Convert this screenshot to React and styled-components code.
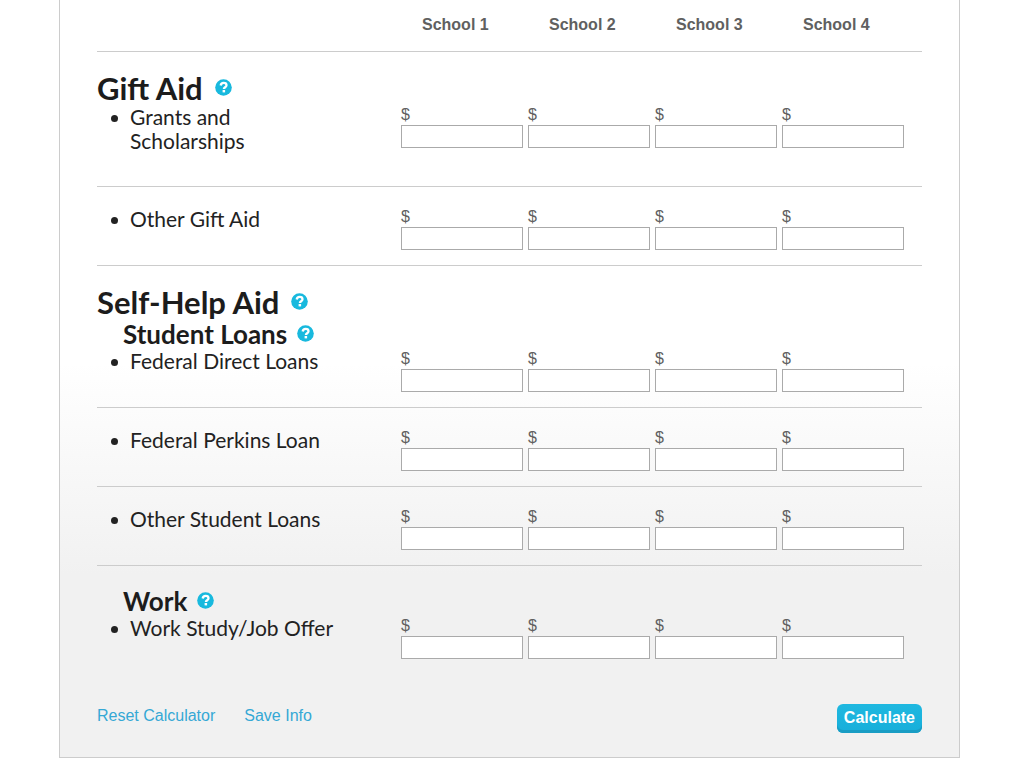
import React from "react";
import styled, { createGlobalStyle } from "styled-components";

const GlobalStyle = createGlobalStyle`
  * {
    box-sizing: border-box;
  }

  body {
    margin: 0;
    background: #fff;
    color: #606060;
    font-family: "Liberation Sans", Arial, sans-serif;
    font-size: 16px;
  }
`;

const schools = ["School 1", "School 2", "School 3", "School 4"];

const sections = [
  {
    id: "gift",
    title: "Gift Aid",
    items: ["Grants and Scholarships", "Other Gift Aid"]
  },
  {
    id: "loans",
    title: "Self-Help Aid",
    subtitle: "Student Loans",
    items: [
      "Federal Direct Loans",
      "Federal Perkins Loan",
      "Other Student Loans"
    ]
  },
  {
    id: "work",
    subtitle: "Work",
    items: ["Work Study/Job Offer"]
  }
];

const HelpButton = ({ topic }) => (
  <Help type="button" aria-label={`Help: ${topic}`}>
    <svg width="17" height="17" viewBox="0 0 17 17" aria-hidden="true">
      <circle cx="8.5" cy="8.5" r="8.3" fill="#18b9de" />
      <path
        d="M5.7 6.5C5.9 4.7 7.1 3.9 8.6 3.9c1.7 0 2.9.9 2.9 2.3 0 2-2.6 2-2.6 3.8"
        fill="none"
        stroke="#fff"
        strokeWidth="2.3"
      />
      <rect x="7.6" y="11" width="2.5" height="2.4" fill="#fff" />
    </svg>
  </Help>
);

const SectionHeading = ({ title, subtitle }) => (
  <tr>
    <HeadingCell colSpan={schools.length + 1}>
      {title && (
        <Title>
          {title}
          <HelpButton topic={title} />
        </Title>
      )}
      {subtitle && (
        <Subtitle>
          {subtitle}
          <HelpButton topic={subtitle} />
        </Subtitle>
      )}
    </HeadingCell>
  </tr>
);

const ItemRow = ({ label, first, last }) => (
  <Row $first={first} $last={last}>
    <ItemCell scope="row">
      <List>
        <Item>{label}</Item>
      </List>
    </ItemCell>
    {schools.map(school => (
      <td key={school}>
        <Field>
          $
          <Amount type="text" aria-label={`${label}, ${school}, in dollars`} />
        </Field>
      </td>
    ))}
  </Row>
);

const App = () => {
  const submitHandler = e => {
    e.preventDefault();
  };

  return (
    <>
      <GlobalStyle />
      <Page>
        <Card onSubmit={submitHandler}>
          <Table>
            <colgroup>
              <LabelCol />
              <SchoolCol />
              <SchoolCol />
              <SchoolCol />
              <SchoolCol $last />
            </colgroup>
            <thead>
              <tr>
                <SchoolHeader as="td" />
                {schools.map(school => (
                  <SchoolHeader key={school} scope="col">
                    {school}
                  </SchoolHeader>
                ))}
              </tr>
            </thead>
            {sections.map((section, s) => (
              <tbody key={section.id}>
                <SectionHeading
                  title={section.title}
                  subtitle={section.subtitle}
                />
                {section.items.map((item, i) => (
                  <ItemRow
                    key={item}
                    label={item}
                    first={i === 0}
                    last={s === sections.length - 1}
                  />
                ))}
              </tbody>
            ))}
          </Table>
          <Footer>
            <Links>
              <Link href="#reset">Reset Calculator</Link>
              <Link href="#save">Save Info</Link>
            </Links>
            <Calculate type="submit">Calculate</Calculate>
          </Footer>
        </Card>
      </Page>
    </>
  );
};

export default App;

const Page = styled.main`
  padding: 0 64px 10px 59px;
`;

const Card = styled.form`
  padding: 0 37px 24px;
  border: 1px solid #ccc;
  border-top: 0;
  background: linear-gradient(#fff 48%, #f1f1f1 76%);
`;

const Table = styled.table`
  width: 100%;
  table-layout: fixed;
  border-collapse: separate;
  border-spacing: 0;

  td,
  th {
    padding: 0;
    vertical-align: top;
    text-align: left;
  }
`;

const LabelCol = styled.col`
  width: auto;
`;

const SchoolCol = styled.col`
  width: ${({ $last }) => ($last ? "140px" : "127px")};
`;

const SchoolHeader = styled.th`
  && {
    height: 52px;
    padding: 15px 0 0 21px;
    border-bottom: 1px solid #ccc;
    font-size: 16px;
    line-height: 20px;
  }
`;

const HeadingCell = styled.th`
  && {
    padding-top: 20px;
    color: #1c1c1c;
    font-family: Lato, sans-serif;
  }
`;

const Title = styled.h2`
  display: flex;
  align-items: center;
  gap: 12px;
  margin: 0;
  font-size: 31px;
  font-weight: 700;
  line-height: 33px;
`;

const Subtitle = styled.h3`
  display: flex;
  align-items: center;
  gap: 10px;
  margin: 0 0 0 26px;
  font-size: 26px;
  font-weight: 700;
  line-height: 30px;
`;

const Help = styled.button`
  display: flex;
  padding: 0 0 2px;
  border: 0;
  background: none;
  cursor: pointer;
`;

const Row = styled.tr`
  td,
  th {
    padding-top: ${({ $first }) => ($first ? "0" : "20px")};
    border-bottom: ${({ $last }) => ($last ? "0" : "1px solid #ccc")};
  }
`;

const ItemCell = styled.th`
  color: #222;
  font-family: Lato, sans-serif;
  font-size: 21px;
  font-weight: 400;
  line-height: 24px;
`;

const List = styled.ul`
  max-width: 240px;
  margin: 0;
  padding: 0 0 33px 14px;
  list-style: none;
`;

const Item = styled.li`
  display: flex;
  gap: 12px;

  &::before {
    content: "";
    flex: none;
    width: 7px;
    height: 7px;
    margin-top: 10px;
    border-radius: 50%;
    background: #222;
  }
`;

const Field = styled.label`
  display: block;
  padding-bottom: 15px;
  font-size: 16px;
  line-height: 20px;
`;

const Amount = styled.input`
  display: block;
  width: 122px;
  height: 23px;
  padding: 1px 4px;
  border: 1px solid #aaa;
  background: #fff;
  font: inherit;
`;

const Footer = styled.div`
  display: flex;
  align-items: flex-start;
  justify-content: space-between;
  padding-top: 30px;
`;

const Links = styled.div`
  display: flex;
  gap: 29px;
`;

const Link = styled.a`
  color: #35a8d5;
  font-size: 16px;
  line-height: 24px;
  text-decoration: none;
`;

const Calculate = styled.button`
  height: 29px;
  padding: 0 7px 2px;
  border: 0;
  border-radius: 6px;
  background: linear-gradient(#1fb8e0, #17aeda);
  box-shadow: inset 0 -3px 0 #1a9dc4;
  color: #fff;
  font-family: inherit;
  font-size: 16px;
  font-weight: 700;
  cursor: pointer;
`;
